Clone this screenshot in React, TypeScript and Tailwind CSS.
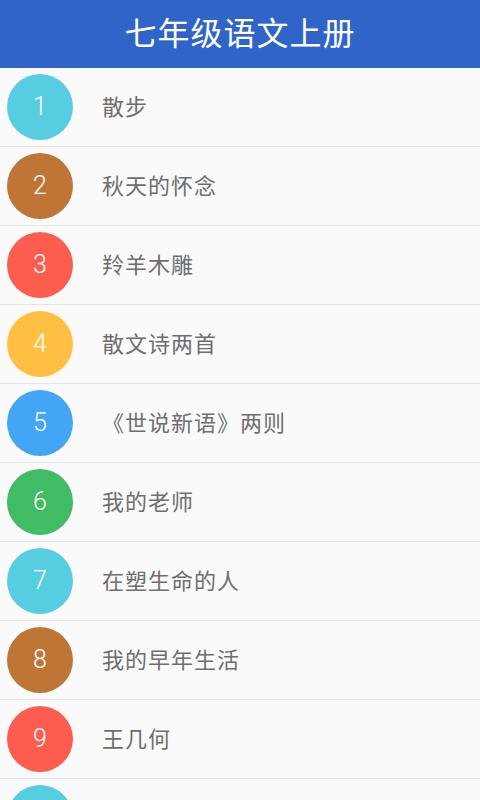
const items: { title: string; color: string }[] = [
	{ title: '散步', color: 'bg-[#56cde0]' },
	{ title: '秋天的怀念', color: 'bg-[#bf7535]' },
	{ title: '羚羊木雕', color: 'bg-[#fc5d4f]' },
	{ title: '散文诗两首', color: 'bg-[#ffbf43]' },
	{ title: '《世说新语》两则', color: 'bg-[#42a5f5]' },
	{ title: '我的老师', color: 'bg-[#41bb64]' },
	{ title: '在塑生命的人', color: 'bg-[#56cde0]' },
	{ title: '我的早年生活', color: 'bg-[#bf7535]' },
	{ title: '王几何', color: 'bg-[#fc5d4f]' },
	{ title: '论语十则', color: 'bg-[#56cde0]' },
];

export default function App() {
	return (
		<div
			className="flex h-[800px] w-[480px] flex-col overflow-hidden bg-[#fafafa]"
			style={{ fontFamily: 'Roboto, "Noto Sans CJK SC", sans-serif' }}
		>
			<div className="flex h-[68px] shrink-0 items-center justify-center bg-[#3164c9]">
				<h1 className="text-[32px] font-normal tracking-[1px] text-white">七年级语文上册</h1>
			</div>
			<ul className="flex flex-col">
				{items.map((item, i) => (
					<li
						key={i}
						className="flex h-[79px] shrink-0 items-center border-b border-[#e4e4e4]"
					>
						<div
							className={`ml-[7px] flex h-[66px] w-[66px] items-center justify-center rounded-full ${item.color}`}
						>
							<span className="text-[25px] font-light text-white">{i + 1}</span>
						</div>
						<span className="ml-[29px] text-[22px] tracking-[1px] text-[#6e6e6e]">{item.title}</span>
					</li>
				))}
			</ul>
		</div>
	);
}
